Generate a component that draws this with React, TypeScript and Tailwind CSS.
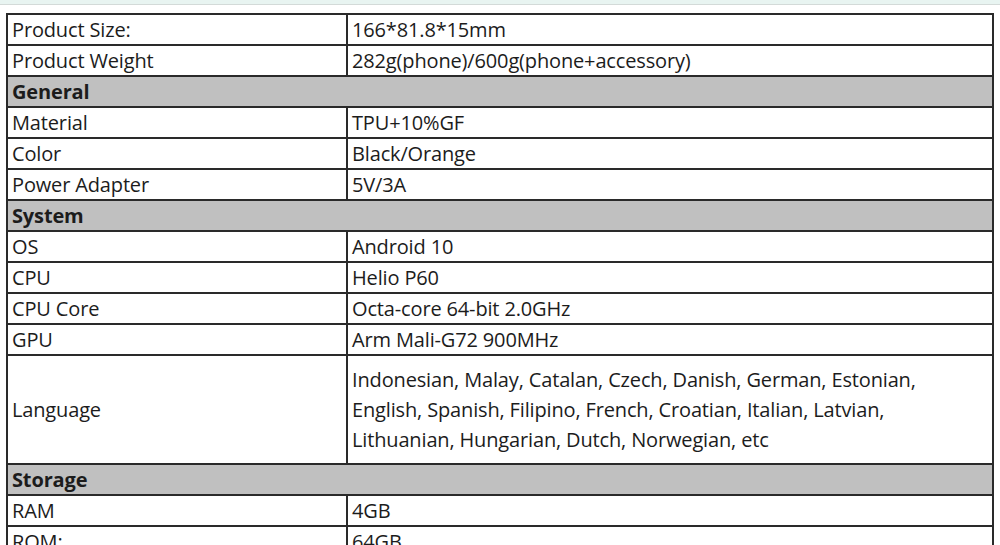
type Row =
  | { kind: "section"; label: string }
  | { kind: "spec"; label: string; value: React.ReactNode; tall?: boolean };

const rows: Row[] = [
  { kind: "spec", label: "Product Size:", value: "166*81.8*15mm" },
  { kind: "spec", label: "Product Weight", value: "282g(phone)/600g(phone+accessory)" },
  { kind: "section", label: "General" },
  { kind: "spec", label: "Material", value: "TPU+10%GF" },
  { kind: "spec", label: "Color", value: "Black/Orange" },
  { kind: "spec", label: "Power Adapter", value: "5V/3A" },
  { kind: "section", label: "System" },
  { kind: "spec", label: "OS", value: "Android 10" },
  { kind: "spec", label: "CPU", value: "Helio P60" },
  { kind: "spec", label: "CPU Core", value: "Octa-core 64-bit 2.0GHz" },
  { kind: "spec", label: "GPU", value: "Arm Mali-G72 900MHz" },
  {
    kind: "spec",
    label: "Language",
    tall: true,
    value: (
      <>
        Indonesian, Malay, Catalan, Czech, Danish, German, Estonian,
        <br />
        English, Spanish, Filipino, French, Croatian, Italian, Latvian,
        <br />
        Lithuanian, Hungarian, Dutch, Norwegian, etc
      </>
    ),
  },
  { kind: "section", label: "Storage" },
  { kind: "spec", label: "RAM", value: "4GB" },
  { kind: "spec", label: "ROM:", value: "64GB" },
];

export default function App() {
  return (
    <div className="h-[545px] w-[1000px] overflow-hidden bg-white font-['Open_Sans',sans-serif] text-[#1c1c1c]">
      <div className="h-[5px] border-b border-[#d3dad8] bg-[#e8f4f1]" />
      <div className="pl-[6px] pt-[8px]">
        <table className="w-[988px] table-fixed border-collapse border-2 border-[#2a2a2a] text-[20px] leading-[26px] tracking-[-0.15px]">
          <colgroup>
            <col className="w-[340px]" />
            <col />
          </colgroup>
          <tbody>
            {rows.map((r, i) =>
              r.kind === "section" ? (
                <tr key={i} className="h-[31px] bg-[#c0c0c0]">
                  <td colSpan={2} className="border-2 border-[#2a2a2a] px-[4px] py-0 font-bold">
                    {r.label}
                  </td>
                </tr>
              ) : (
                <tr key={i} className={r.tall ? "h-[109px]" : "h-[31px]"}>
                  <td className="border-2 border-[#2a2a2a] px-[4px] py-0 align-middle">{r.label}</td>
                  <td
                    className={
                      r.tall
                        ? "border-2 border-[#2a2a2a] px-[4px] py-0 align-middle leading-[30px]"
                        : "border-2 border-[#2a2a2a] px-[4px] py-0 align-middle"
                    }
                  >
                    {r.value}
                  </td>
                </tr>
              )
            )}
          </tbody>
        </table>
      </div>
    </div>
  );
}
